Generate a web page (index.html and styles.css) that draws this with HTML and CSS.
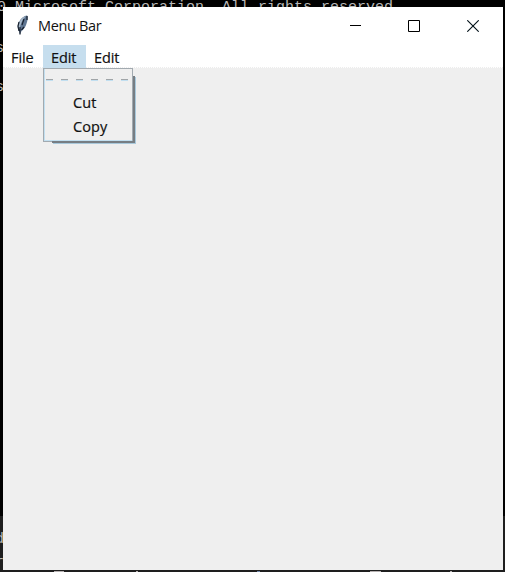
FILE: index.html
```html
<!DOCTYPE html>
<html lang="en">
<head>
<meta charset="utf-8">
<title>Menu Bar</title>
<link rel="stylesheet" href="styles.css">
</head>
<body>
<div class="desktop">
  <div class="console console-top">0 Microsoft Corporation. All rights reserved.</div>
  <div class="console console-left console-a">s</div>
  <div class="console console-left console-b">s</div>
  <div class="console-lower"></div>
  <div class="console console-left console-c">d</div>
  <div class="console console-left console-d">r</div>
  <i class="mark mark-a"></i><i class="mark mark-b"></i><i class="mark mark-c"></i><i class="mark mark-d"></i><i class="mark mark-e"></i>
  <main class="window">
    <header class="titlebar">
      <svg class="feather" width="14" height="22" viewBox="0 0 14 22">
        <path d="M11 1.5C7.500 2 4.500 5 3 8C1 12 1.500 15 3 17.500L4 20.500L5.500 17C8.500 15 10 12 11 8C12 5 12 2 11 1.500Z" fill="#5f7692"/>
        <path d="M10 2.500C7 4 5 9 4 13L3 16C1.500 13 2.500 9 5 5.500C7 3 9 2 10 2.500Z" fill="#a9bacb"/>
        <path d="M4 13L4 20.500M3 8L2 12L3 17M5.500 16L8 13M8 5L6 11M11 2L11 6" fill="none" stroke="#18212e" stroke-width="1.200"/>
      </svg>
      <h1 class="title">Menu Bar</h1>
      <div class="controls">
        <svg width="12" height="12"><path d="M1 5.500H12" stroke="#000"/></svg>
        <svg width="12" height="12"><path d="M.5 .5H11.500V11.500H.5Z" fill="none" stroke="#000"/></svg>
        <svg width="12" height="12"><path d="M.3 .3L11.700 11.700M11.700 .3L.3 11.700" stroke="#001018" stroke-width="1.100"/></svg>
      </div>
    </header>
    <nav class="menubar">
      <span class="item file">File</span>
      <span class="item active">Edit</span>
      <span class="item">Edit</span>
    </nav>
    <div class="dropdown">
      <svg class="tearoff" width="82" height="2"><path d="M0 .5H82" stroke="#a0a5a8" stroke-dasharray="7 8"/><path d="M0 1.500H82" stroke="#c2dff0" stroke-dasharray="7 8"/></svg>
      <div class="option">Cut</div>
      <div class="option">Copy</div>
    </div>
  </main>
</div>
</body>
</html>
```
FILE: styles.css
```css
body { margin: 0; }
.desktop {
  position: relative;
  width: 505px;
  height: 572px;
  overflow: hidden;
  background: #000;
  display: flex;
  box-sizing: border-box;
  padding: 7px 2px 2px 3px;
}
.console {
  position: absolute;
  font: 15px/18px "Liberation Mono", monospace;
  color: #b8b8b8;
  white-space: pre;
}
.console-top { left: -3px; top: -1px; }
.console-left { left: -5px; }
.console-a { top: 40px; }
.console-b { top: 79px; }
.console-c { top: 531px; }
.console-d { top: 554px; }
.console-lower {
  position: absolute;
  left: 0;
  right: 0;
  top: 516px;
  bottom: 0;
  background: #1e1e1e;
}
.mark { position: absolute; top: 571px; height: 1px; background: #b5b0b0; }
.mark-a { left: 54px; width: 10px; }
.mark-b { left: 136px; width: 2px; }
.mark-c { left: 257px; width: 3px; background: #7085a5; }
.mark-d { left: 370px; width: 11px; }
.mark-e { left: 450px; width: 2px; }
.window {
  position: relative;
  flex: 1;
  background: #efefef;
  font-family: "Open Sans", "Noto Sans", sans-serif;
  color: #111;
}
.titlebar {
  height: 38px;
  background: #fff;
  display: flex;
  align-items: center;
  box-sizing: border-box;
  padding: 0 24px 0 13px;
}
.feather { margin: 0 8px 3px 0; }
.title {
  margin: 0 0 2px;
  font-size: 14.5px;
  font-weight: 400;
  letter-spacing: -0.35px;
}
.controls { margin: 0 0 0 auto; display: flex; gap: 47px; }
.menubar {
  height: 23px;
  background: #fff;
  border-bottom: 1px dotted #ededed;
  box-sizing: border-box;
  display: flex;
}
.item {
  width: 43px;
  height: 23px;
  box-sizing: border-box;
  padding-left: 8px;
  font-size: 14.5px;
  line-height: 25px;
  letter-spacing: -0.1px;
  -webkit-text-stroke: 0.2px #111;
}
.file { width: 40px; }
.active { background: #c6deee; }
.dropdown {
  position: absolute;
  left: 40px;
  top: 61px;
  width: 90px;
  height: 74px;
  box-sizing: border-box;
  border: 1px solid #a2aab0;
  background: #efefef;
  box-shadow: inset 1px -1px 0 #c2dff0;
}
.dropdown::after {
  content: "";
  position: absolute;
  left: 8px;
  top: 7px;
  width: 81px;
  height: 65px;
  border: solid #777e84;
  border-width: 0 2px 2px 0;
  box-shadow: 1px 1px 0 #a9c9dc;
}
.tearoff { display: block; margin: 10px 0 10px 2px; }
.option {
  height: 24px;
  padding-left: 29px;
  font-size: 14.5px;
  line-height: 24px;
  letter-spacing: 0.1px;
  -webkit-text-stroke: 0.2px #111;
}
```
